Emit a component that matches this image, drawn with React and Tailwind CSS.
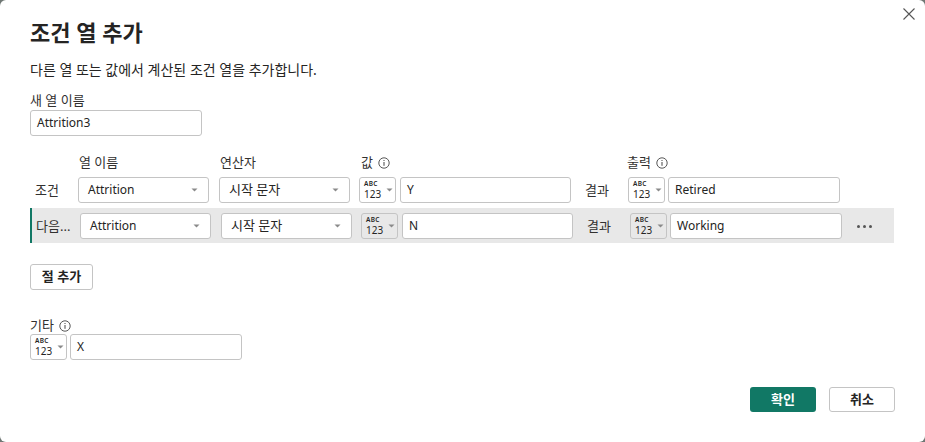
const font = { fontFamily: '"Segoe UI", "Noto Sans", "Noto Sans CJK KR", sans-serif' };

const Caret = () => (
  <svg width="7" height="4" viewBox="0 0 7 4" className="shrink-0">
    <path d="M0.5 0.5 L6.5 0.5 L3.5 3.5 Z" fill="#8a8a8a" />
  </svg>
);

const Info = () => (
  <svg width="12" height="12" viewBox="0 0 12 12" className="inline-block ml-[5px] -mt-[2px]">
    <circle cx="6" cy="6" r="5.2" fill="none" stroke="#444" strokeWidth="0.9" />
    <rect x="5.5" y="5" width="1" height="3.8" fill="#444" />
    <rect x="5.5" y="3" width="1" height="1" fill="#444" />
  </svg>
);

const Select = ({ value, className = "" }) => (
  <div className={`h-[26px] w-[131px] shrink-0 flex items-center justify-between pl-[9px] pr-[10px] bg-white border border-[#c4c4c4] rounded-[3px] ${className}`}>
    <span className={/[A-Za-z]/.test(value) ? "text-[12px] text-[#252423]" : "text-[13px] text-[#252423]"}>{value}</span>
    <Caret />
  </div>
);

const TypeBtn = ({ className = "" }) => (
  <div className={`h-[26px] w-[37px] shrink-0 flex items-center gap-[5px] pl-[4px] border border-[#c4c4c4] rounded-[3px] ${className}`}>
    <div className="flex flex-col text-[#252423]" style={{ fontFamily: '"Noto Sans", sans-serif' }}>
      <span className="block text-[6.5px] leading-[9px] font-semibold tracking-[0.3px]">ABC</span>
      <span className="block text-[10px] leading-[13px]">123</span>
    </div>
    <Caret />
  </div>
);

const TextBox = ({ value, w, className = "" }) => (
  <div className={`h-[26px] shrink-0 flex items-center px-[6px] bg-white border border-[#c4c4c4] rounded-[3px] text-[12px] text-[#252423] ${w} ${className}`}>
    {value}
  </div>
);

const ClauseRow = ({ label, field, op, val, out, active }) => (
  <div className={`flex items-center ${active ? "bg-[#e8e8e8] border-l-2 border-[#117865] w-[864px] pt-[5px] pb-[4px]" : ""}`}>
    <div className={`w-[48px] shrink-0 text-[13px] text-[#323130] pt-[2px] ${active ? "pl-[4px]" : "pl-[5px]"}`}>{label}</div>
    <Select value={field} />
    <Select value={op} className="ml-[10px]" />
    <TypeBtn className={`ml-[9px] ${active ? "bg-transparent" : "bg-white"}`} />
    <TextBox value={val} w="w-[171px]" className="ml-[4px]" />
    <div className="w-[57px] shrink-0 pl-[14px] text-[13px] text-[#323130] pt-[2px]">결과</div>
    <TypeBtn className={active ? "bg-transparent" : "bg-white"} />
    <TextBox value={out} w="w-[172px]" className="ml-[3px]" />
    {active && (
      <div className="ml-[15px] flex gap-[3px] items-center">
        <span className="w-[3px] h-[3px] rounded-full bg-[#555]" />
        <span className="w-[3px] h-[3px] rounded-full bg-[#555]" />
        <span className="w-[3px] h-[3px] rounded-full bg-[#555]" />
      </div>
    )}
  </div>
);

export default function App() {
  return (
    <div className="w-[925px] h-[442px] bg-[#6f7774] overflow-hidden" style={font}>
      <div className="relative w-full h-full bg-white rounded-[6px] px-[30px] pt-[17px] text-[#252423]">
        <svg width="12" height="12" viewBox="0 0 12 12" className="absolute right-[10px] top-[8px]">
          <path d="M0.5 0.5 L11.5 11.5 M11.5 0.5 L0.5 11.5" stroke="#555" strokeWidth="1.1" />
        </svg>

        <h1 className="text-[22px] leading-[30px] font-bold text-[#252423]">조건 열 추가</h1>
        <p className="mt-[13px] text-[14px] leading-[20px]">다른 열 또는 값에서 계산된 조건 열을 추가합니다.</p>

        <div className="mt-[10px] text-[13px] leading-[20px] text-[#323130]">새 열 이름</div>
        <TextBox value="Attrition3" w="w-[172px]" className="h-[25px]" />

        <div className="mt-[16px] flex text-[13px] leading-[20px] text-[#323130]">
          <span className="ml-[49px] w-[141px]">열 이름</span>
          <span className="w-[141px]">연산자</span>
          <span className="w-[266px]">값<Info /></span>
          <span>출력<Info /></span>
        </div>

        <div className="mt-[5px] flex flex-col gap-[5px]">
          <ClauseRow label="조건" field="Attrition" op="시작 문자" val="Y" out="Retired" />
          <ClauseRow label="다음..." field="Attrition" op="시작 문자" val="N" out="Working" active />
        </div>

        <button className="mt-[21px] h-[26px] w-[63px] border border-[#c4c4c4] rounded-[3px] bg-white text-[13px] font-semibold text-[#252423]">
          절 추가
        </button>

        <div className="mt-[26px] text-[13px] leading-[18px] text-[#323130]">기타<Info /></div>
        <div className="flex items-center gap-[3px]">
          <TypeBtn className="bg-white h-[25px]" />
          <TextBox value="X" w="w-[172px]" className="h-[25px]" />
        </div>

        <div className="mt-[27px] flex justify-end gap-[13px]">
          <button className="h-[25px] w-[66px] rounded-[3px] bg-[#117865] text-white text-[13px] font-bold">확인</button>
          <button className="h-[25px] w-[66px] rounded-[3px] border border-[#c4c4c4] bg-white text-[13px] font-semibold text-[#252423]">취소</button>
        </div>
      </div>
    </div>
  );
}
